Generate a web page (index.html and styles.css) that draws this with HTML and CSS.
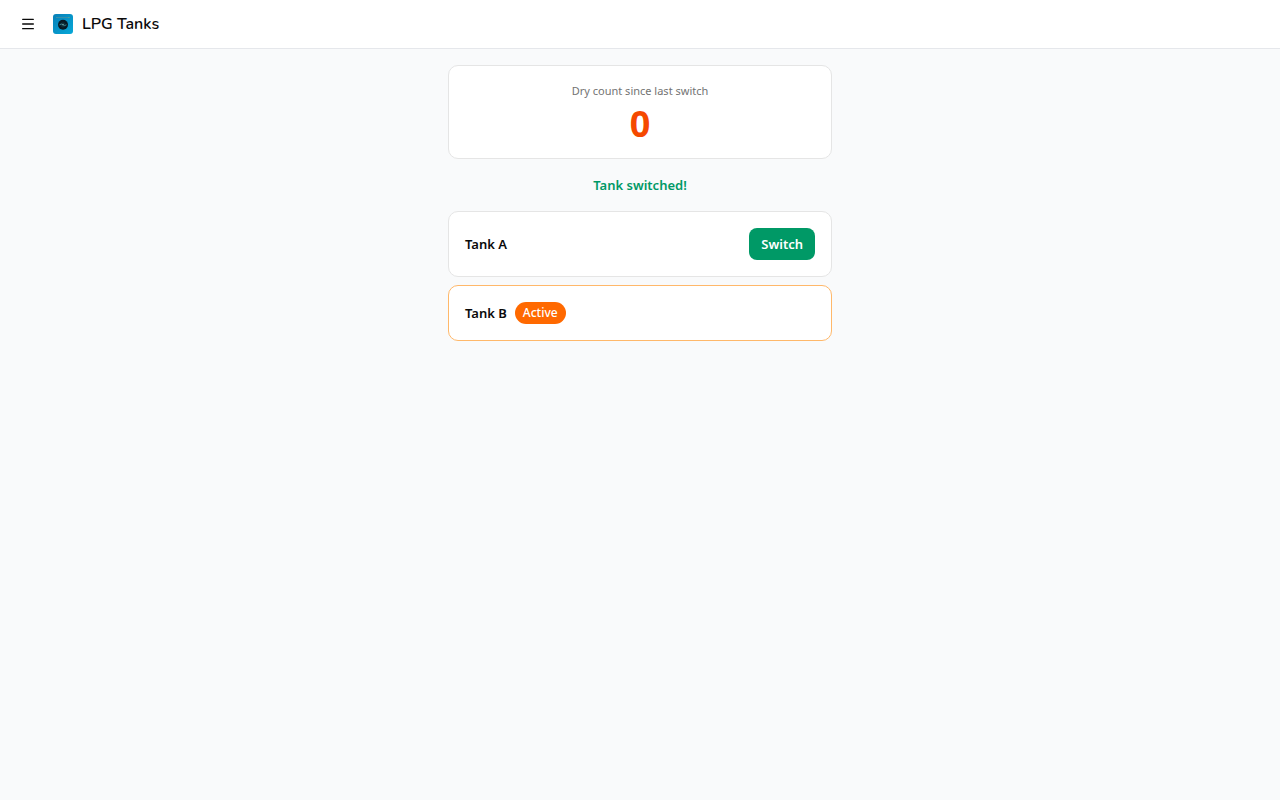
FILE: index.html
```html
<!DOCTYPE html>
<html lang="en">
<head>
    <meta charset="UTF-8">
    <meta name="viewport" content="width=device-width, initial-scale=1.0">
    <title>LPG Tanks</title>
    <link rel="stylesheet" href="styles.css">
</head>
<body>
<header class="topbar">
    <button type="button" class="menu-button" aria-label="Open menu">
        <svg width="16" height="16" viewBox="0 0 16 16" fill="none" stroke="currentColor" stroke-width="1.33" stroke-linecap="round">
            <path d="M2.67 3.33h10.66M2.67 8h10.66M2.67 12.67h10.66"/>
        </svg>
    </button>
    <svg class="logo" width="20" height="20" viewBox="0 0 20 20" aria-hidden="true">
        <defs>
            <linearGradient id="logo-bg" x1="0" y1="0" x2="1" y2="1">
                <stop offset="0" stop-color="#0880b8"/>
                <stop offset="1" stop-color="#06a8d8"/>
            </linearGradient>
        </defs>
        <rect width="20" height="20" rx="3" fill="url(#logo-bg)"/>
        <path d="M3 3.5h13" stroke="#3a8fa8" stroke-width="1"/>
        <circle cx="16" cy="3.5" r=".6" fill="#63b58c"/>
        <circle cx="10" cy="10.8" r="5" fill="#071a24"/>
        <circle cx="10" cy="10.8" r="2.6" fill="#0c2c38"/>
        <path d="M6.5 10.8q1.8-1.5 3.5 0t3.5 0" fill="none" stroke="#38808f" stroke-width="1"/>
        <circle cx="10" cy="10.6" r=".8" fill="#6c9e98"/>
    </svg>
    <h1>LPG Tanks</h1>
</header>
<main class="container">
    <section class="card count-card">
        <p class="count-label">Dry count since last switch</p>
        <p class="count-value">0</p>
    </section>
    <p class="message" role="status">Tank switched!</p>
    <div class="tank-list">
        <div class="card tank">
            <span class="tank-name">Tank A</span>
            <button type="button" class="switch-button">Switch</button>
        </div>
        <div class="card tank tank-active">
            <span class="tank-name">Tank B</span>
            <span class="badge">Active</span>
        </div>
    </div>
</main>
</body>
</html>
```
FILE: styles.css
```css
* {
    box-sizing: border-box;
}
body {
    font-family: "Noto Sans", sans-serif;
    font-size: 13px;
    line-height: 20px;
    background: #f9fafb;
    color: #0a0a0a;
    margin: 0;
    min-height: 100vh;
}
h1, p {
    margin: 0;
}
.topbar {
    display: flex;
    align-items: center;
    height: 49px;
    padding: 0 12px;
    background: #ffffff;
    border-bottom: 1px solid #e5e7eb;
}
.menu-button {
    display: flex;
    align-items: center;
    justify-content: center;
    width: 32px;
    height: 32px;
    padding: 0;
    color: inherit;
    background: none;
    border: none;
    border-radius: 8px;
    cursor: pointer;
}
.logo {
    margin: 0 9px;
}
.topbar h1 {
    font-family: Nunito, "Noto Sans", sans-serif;
    font-size: 16px;
    font-weight: 600;
    line-height: 24px;
}
.container {
    display: flex;
    flex-direction: column;
    gap: 16px;
    max-width: 416px;
    margin: 0 auto;
    padding: 16px;
}
.card {
    padding: 16px;
    background: #ffffff;
    border: 1px solid #e5e5e5;
    border-radius: 10px;
}
.count-card {
    padding-bottom: 14px;
    text-align: center;
}
.count-label {
    margin-bottom: 4px;
    font-size: 11px;
    line-height: 18px;
    color: #737373;
}
.count-value {
    font-size: 36px;
    font-weight: 700;
    line-height: 40px;
    color: #f54900;
}
.message {
    font-weight: 600;
    text-align: center;
    color: #009966;
}
.tank-list {
    display: flex;
    flex-direction: column;
    gap: 8px;
}
.tank {
    display: flex;
    align-items: center;
    gap: 8px;
}
.tank-active {
    border-color: #ffb86a;
}
.tank-name {
    font-weight: 600;
}
.switch-button {
    height: 32px;
    margin-left: auto;
    padding: 0 12px;
    font-family: inherit;
    font-size: 13px;
    font-weight: 600;
    color: #ffffff;
    background: #009966;
    border: none;
    border-radius: 8px;
    cursor: pointer;
}
.badge {
    padding: 3px 8px;
    font-size: 12px;
    font-weight: 500;
    line-height: 16px;
    color: #ffffff;
    background: #ff6900;
    border-radius: 11px;
}
```
